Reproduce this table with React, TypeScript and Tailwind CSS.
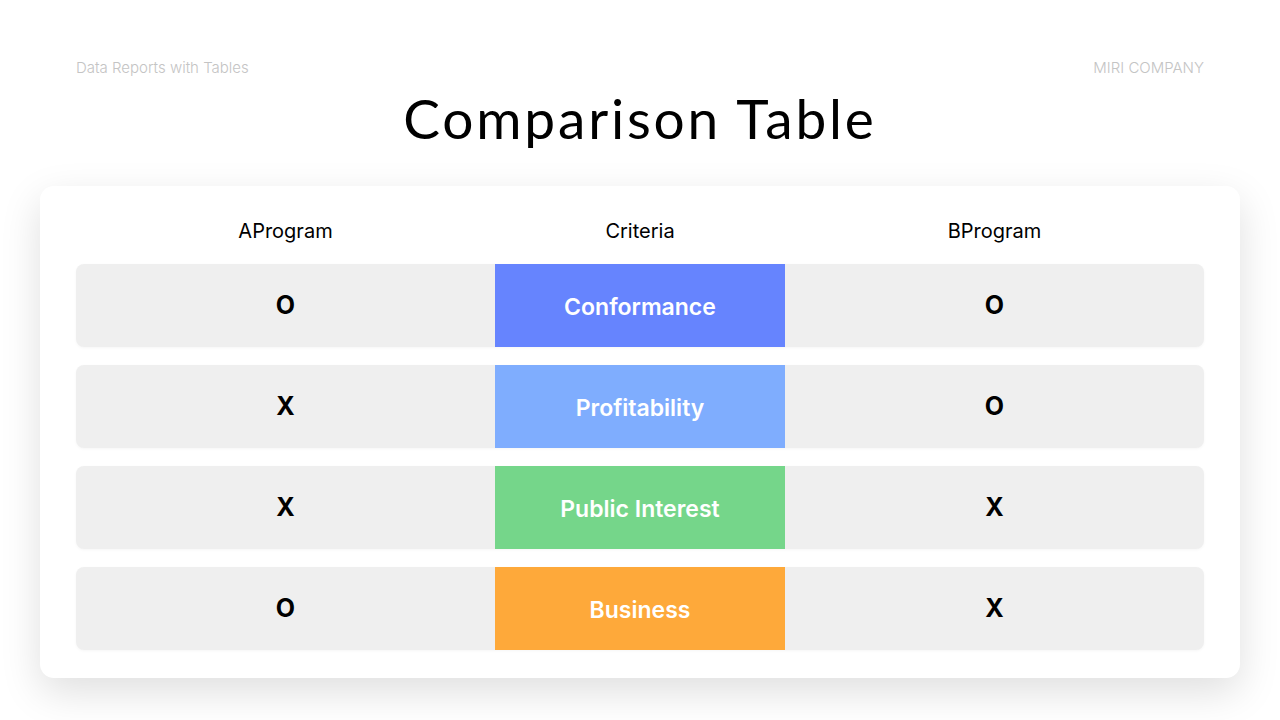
import React from "react";

const rows = [
  { a: "O", label: "Conformance", color: "bg-[#6684fe]", b: "O" },
  { a: "X", label: "Profitability", color: "bg-[#7fadfe]", b: "O" },
  { a: "X", label: "Public Interest", color: "bg-[#75d68a]", b: "X" },
  { a: "O", label: "Business", color: "bg-[#fea93a]", b: "X" },
];

export default function App() {
  return (
    <div className="w-[1280px] h-[720px] bg-white overflow-hidden flex flex-col font-['Inter',sans-serif]">
      <div className="flex justify-between px-[76px] pt-[60px] text-[15px] leading-[16px] font-light text-[#c4c4c4]">
        <span>Data Reports with Tables</span>
        <span>MIRI COMPANY</span>
      </div>
      <h1 className="mt-[12px] text-center text-[55px] leading-[60px] tracking-[2.8px] text-black font-['Lato',sans-serif] font-normal">
        Comparison Table
      </h1>
      <div className="mt-[38px] mx-[40px] h-[492px] bg-white rounded-[14px] shadow-[0_14px_40px_rgba(0,0,0,0.13)] px-[36px] pt-[31px]">
        <div className="grid grid-cols-[419px_290px_419px] text-[20px] leading-[28px] text-black text-center">
          <span>AProgram</span>
          <span>Criteria</span>
          <span>BProgram</span>
        </div>
        <div className="mt-[19px] flex flex-col gap-[18px]">
          {rows.map((r) => (
            <div
              key={r.label}
              className="h-[83px] grid grid-cols-[419px_290px_419px] rounded-[8px] bg-[#efefef] shadow-[0_1px_3px_rgba(0,0,0,0.04)]"
            >
              <div className="flex items-center justify-center text-[25px] font-bold text-black">
                {r.a}
              </div>
              <div className={`${r.color} flex items-center justify-center pt-[3px] text-white text-[23px] font-semibold`}>
                {r.label}
              </div>
              <div className="flex items-center justify-center text-[25px] font-bold text-black">
                {r.b}
              </div>
            </div>
          ))}
        </div>
      </div>
    </div>
  );
}
